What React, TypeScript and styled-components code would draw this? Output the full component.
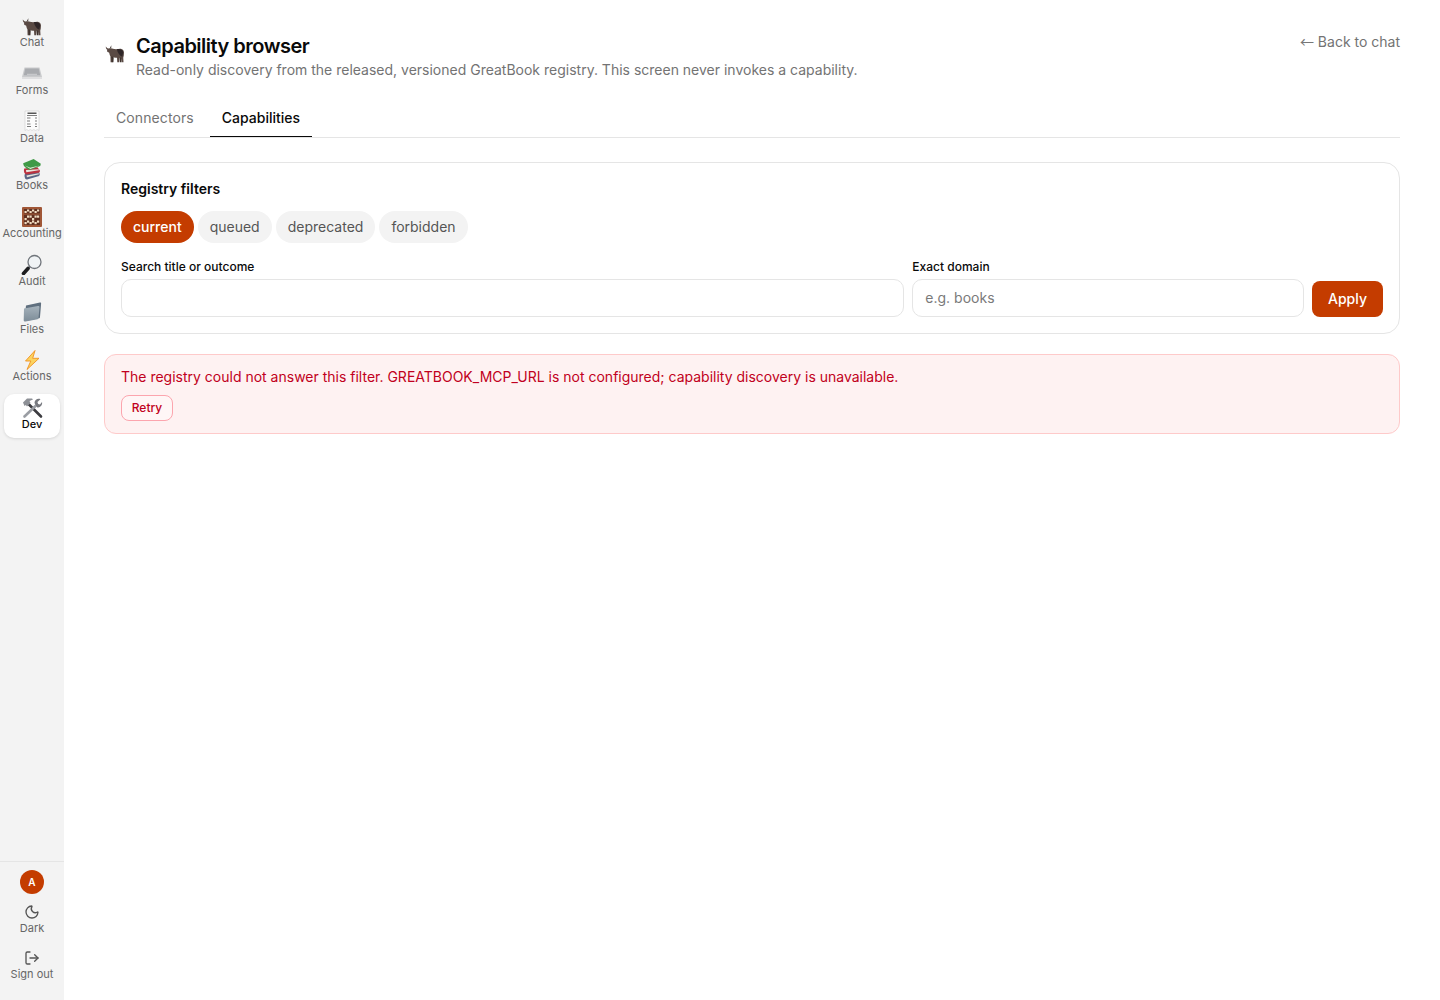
import React from "react";
import styled, { createGlobalStyle } from "styled-components";
import { Moon, LogOut } from "lucide-react";

const Global = createGlobalStyle`
  html, body { margin: 0; padding: 0; background: #fff; }
  body { font-family: Inter, "Liberation Sans", sans-serif; color: #0a0a0a; }
  * { box-sizing: border-box; }
`;
const Shell = styled.div`display: flex; min-height: 1000px; height: 1000px;`;
const Rail = styled.nav`
  width: 64px; flex: none; background: #f3f3f3; display: flex; flex-direction: column;
  align-items: center; padding: 12px 0 12px;
`;
const NavList = styled.div`display: flex; flex-direction: column; gap: 4px; align-items: center; flex: 1; width: 100%;`;
const NavItem = styled.a<{ $active?: boolean }>`
  width: 56px; height: 43.75px; display: flex; flex-direction: column; align-items: center; padding-top: 4px;
  border-radius: 10px; font-size: 11px; line-height: 14px; white-space: nowrap;
  color: ${p => (p.$active ? "#0a0a0a" : "#666")};
  background: ${p => (p.$active ? "#fff" : "transparent")};
  box-shadow: ${p => (p.$active ? "0 1px 3px rgba(0,0,0,.12)" : "none")};
  font-weight: ${p => (p.$active ? 500 : 400)};
`;
const NavIcon = styled.span`height: 19px; display: flex; align-items: center; justify-content: center; svg { display: block; flex: none; }`;
const RailFoot = styled.div`
  width: 100%; border-top: 1px solid #e5e5e5; display: flex; flex-direction: column; align-items: center;
  padding-top: 8px;
`;
const Avatar = styled.div`
  width: 24px; height: 24px; border-radius: 50%; background: #c43c00; color: #fff;
  font-size: 10px; font-weight: 600; display: flex; align-items: center; justify-content: center; margin-bottom: 2px;
`;
const FootButton = styled.a`
  height: 46px; display: flex; flex-direction: column; align-items: center; justify-content: center; gap: 1px;
  font-size: 11px; line-height: 14px; color: #666;
  svg { color: #555; }
`;
const Main = styled.main`flex: 1; padding: 32px 40px; min-width: 0;`;
const Header = styled.header`display: flex; justify-content: space-between; align-items: flex-start;`;
const TitleRow = styled.div`display: flex; align-items: center; gap: 10px; height: 48px;`;
const HeadIcon = styled.span`display: flex; margin-top: -7px;`;
const Title = styled.h1`margin: 0; font-size: 20px; line-height: 28px; font-weight: 600; letter-spacing: -0.5px; color: #0a0a0a;`;
const Sub = styled.p`margin: 0; font-size: 14px; line-height: 20px; color: #737373;`;
const Back = styled.a`font-size: 14px; line-height: 20px; color: #737373; margin-top: -1px;`;
const Arrow = styled.span`font-family: "Noto Sans CJK JP", sans-serif; color: #777; margin-left: -1px;`;
const Tabs = styled.div`display: flex; gap: 4px; margin-top: 18px; border-bottom: 1px solid #e5e5e5; height: 40px;`;
const Tab = styled.div<{ $active?: boolean }>`
  padding: 0 12px; height: 39px; line-height: 40px; font-size: 14px; font-weight: ${p => (p.$active ? 500 : 400)};
  letter-spacing: ${p => (p.$active ? "0" : "0.1px")};
  color: ${p => (p.$active ? "#0a0a0a" : "#737373")};
  border-bottom: 1px solid ${p => (p.$active ? "#0a0a0a" : "transparent")};
`;
const Card = styled.section`
  margin-top: 24px; border: 1px solid #e5e5e5; border-radius: 16px; padding: 16px; height: 172px;
`;
const CardTitle = styled.h2`margin: 0; font-size: 14px; line-height: 20px; font-weight: 600;`;
const Chips = styled.div`display: flex; gap: 4px; margin-top: 12px;`;
const Chip = styled.div<{ $active?: boolean }>`
  height: 32px; line-height: 32px; padding: 0 12px; border-radius: 999px; font-size: 14px;
  background: ${p => (p.$active ? "#c43c00" : "#f3f3f3")};
  color: ${p => (p.$active ? "#fff" : "#555")};
  font-weight: ${p => (p.$active ? 500 : 400)};
`;
const FilterRow = styled.div`display: flex; gap: 8px; align-items: flex-end; margin-top: 16px;`;
const Field = styled.label<{ $grow: number }>`display: flex; flex-direction: column; gap: 4px; flex: ${p => p.$grow} 1 0; min-width: 0;`;
const FieldLabel = styled.span`font-size: 12px; line-height: 16px; font-weight: 500; color: #0a0a0a;`;
const Input = styled.input`
  height: 38px; width: 100%; border: 1px solid #e5e5e5; border-radius: 10px; padding: 0 12px 2px; font: 14px Inter, sans-serif; outline: none;
  &::placeholder { color: #7a7a7a; }
`;
const Apply = styled.button`
  height: 36px; width: 71px; flex: none; border: 0; border-radius: 8px; background: #c43c00; color: #fff; font: 500 14px Inter, sans-serif; padding: 0 0 2px;
`;
const ErrorBox = styled.div`
  margin-top: 20px; height: 80px; border: 1px solid #fecaca; background: #fef2f2; border-radius: 12px; padding: 12px 16px;
`;
const ErrorText = styled.p`margin: 0; font-size: 14px; line-height: 20px; color: #c10020;`;
const Retry = styled.button`
  display: block; margin-top: 8px; height: 26px; width: 52px; padding: 0 0 2px; border: 1px solid #fca5ae; background: #fff6f6; border-radius: 8px;
  color: #c10020; font: 500 12px Inter, sans-serif;
`;

const Ox = ({ size = 22 }: { size?: number }) => (
  <svg width={size} height={size} viewBox="0 0 24 24">
    <path d="M5 7c2-.6 4 .2 6 .6 3 .6 6-.6 8 0 1.800.5 2.800 2 2.800 4 0 2-.3 4-.8 5.500l.3 4.900h-2l-.8-4.400-1.500-.5-.5 4.900h-2l-.3-4.900c-2 .3-3.500 0-4.500-.8l-.5 5.700h-2L7 15.500c-1-1.500-1-3-1.500-4C4 11.500 2.800 10.500 3.500 8.500 2.500 8 1.800 6.500 2 5c1 1.500 2 2.200 3 2Z" fill="#5a4a44"/>
    <path d="M6.500 6.600 8 3.500 7.800 7Z" fill="#3e322d"/>
    <path d="M14 7.800c3-.6 6 .2 7 3l-1 5.200c-3-1-5-4-6-8.200Z" fill="#2f2628"/>
    <path d="M8 15.500l.5 6.500h1.800l.3-5.500ZM17 17l.3 5H19l-.3-5Z" fill="#3e322d"/>
  </svg>
);
const Keyboard = () => (
  <svg width="22" height="22" viewBox="0 -1 22 22">
    <path d="M3.500 4.500h15L21 14v1.500H1V14Z" fill="#c9cacc"/>
    <path d="M4.300 5.500h13.400l1.500 6.800H2.800Z" fill="#a9abaf"/>
    <path d="M1 14h20v1.500H1Z" fill="#dfdfe0"/>
    <path d="M6 10.800h10v1H6Z" fill="#cfd0d2"/>
  </svg>
);
const Receipt = () => (
  <svg width="22" height="22" viewBox="0 0 22 22">
    <path d="M4 1h14v19.500l-1.700-1-1.800 1-1.700-1-1.800 1-1.700-1-1.800 1-1.700-1-1.800 1Z" fill="#fcfcfc" stroke="#cfcfcf" strokeWidth=".6"/>
    <path d="M6.500 2.500h9V4h-9ZM6 5h10v.7H6Z" fill="#555"/>
    <path d="M6 7.500h3.500v1H6ZM14 7.500h2v1h-2ZM6 10.500h3v1H6ZM14 10.500h2v1h-2ZM6 13.500h3.500v1H6ZM14 13.500h2v1h-2ZM6 16h4v1H6ZM14 16h2v1h-2Z" fill="#7d7d7d"/>
  </svg>
);
const Books = () => (
  <svg width="22" height="22" viewBox="2 1 18 20">
    <path d="M4.500 15.500 16.500 13l1.700 2.500-.7 1.800L6.500 20.500c-2 .3-2.800-3.500-2-5Z" fill="#5b6685"/>
    <path d="M6 17 17 14.800l.3 1L6.500 18.500Z" fill="#e6e3dc"/>
    <path d="M4 10.500 16 9.500l2.300 3-.5 1.700L6 16c-2.200 0-2.800-4-2-5.500Z" fill="#bb3240"/>
    <path d="M5.500 12 17 11.200l.3 1L5.800 14Z" fill="#e9e4dc"/>
    <path d="M3 5.800 12.500 2 19 6.300l-.5 2L9 12c-3-1-6-3.500-6-6.200Z" fill="#3f9a46"/>
    <path d="M4.500 7.800 9.500 11l8.300-3.200-8.500 2Z" fill="#e9e9e0"/>
  </svg>
);
const Abacus = () => (
  <svg width="22" height="22" viewBox="0 0 22 22">
    <rect x="1" y="1" width="20" height="20" rx="1" fill="#a05636"/>
    <rect x="3" y="3" width="16" height="16" fill="#5f2f1f"/>
    <path d="M3 7.500h16v1.200H3Z" fill="#a15a3a"/>
    {[3.5, 6, 8.5, 11, 13.5, 16].map((x, i) => (
      <g key={i} fill="#f0dcc2">
        <rect x={x} y={i % 2 ? 3.5 : 5} width="2.2" height="2"/>
        <rect x={x} y={i % 3 ? 9.5 : 12} width="2.2" height="2.2"/>
        <rect x={x} y={i % 2 ? 14.5 : 16} width="2.2" height="2.2"/>
      </g>
    ))}
  </svg>
);
const Magnifier = () => (
  <svg width="22" height="22" viewBox="0 -1 22 22">
    <circle cx="13.500" cy="8" r="6.500" fill="#f0f3f5" stroke="#70757b" strokeWidth="1.300"/>
    <path d="M9 12.500 7.500 14" stroke="#6a6e74" strokeWidth="2"/>
    <path d="M7 14.500 2.500 19.500" stroke="#1d1d1f" strokeWidth="3.600" strokeLinecap="round"/>
  </svg>
);
const Folder = () => (
  <svg width="22" height="22" viewBox="0 0 22 22">
    <path d="M5 4.500 19 1.500c.8-.1 1.200.4 1.100 1.200L19 16c0 .8-.5 1.200-1.200 1.300L5 20c-1 .2-1.800-.2-1.700-1.200Z" fill="#5f6f7e"/>
    <defs>
      <linearGradient id="folderFront" x1="0" y1="0" x2="0" y2="1"><stop offset="0" stopColor="#a5b2bb"/><stop offset="1" stopColor="#7d8c98"/></linearGradient>
    </defs>
    <path d="M3 7.500l14-2.500c1-.1 1.600.3 1.500 1.300L17.500 17c0 .7-.4 1-1 1.200L4.500 20.500c-1 .1-1.800-.3-1.800-1.300Z" fill="url(#folderFront)"/>
  </svg>
);
const Bolt = () => (
  <svg width="22" height="22" viewBox="0 0 22 22">
    <path d="M14 1.500 4.500 12h5.300L6 20.500 18 9.300h-6.300Z" fill="#fbd35f" stroke="#f0911f" strokeWidth=".9" strokeLinejoin="round"/>
  </svg>
);
const Tools = () => (
  <svg width="22" height="22" viewBox="0 0 22 22">
    <path d="M6.500 6 20 19.500" stroke="#3c3c40" strokeWidth="2.600" strokeLinecap="round"/>
    <path d="M2 5.500 6 1.500h5l1 1L8.500 4l1 2-3.500 3.500-1.200-1.500L3.500 9Z" fill="#8d9096"/>
    <path d="M16 7.500 3.500 19.500" stroke="#9a9da3" strokeWidth="2.600" strokeLinecap="round"/>
    <path d="M13.500 6c0-3 3-5 6-3.800L16.500 5l.5 2 2 .5L21 5c.8 3-2 6.200-5 5.200Z" fill="#77797f"/>
  </svg>
);

const nav = [
  { label: "Chat", icon: <Ox /> },
  { label: "Forms", icon: <Keyboard /> },
  { label: "Data", icon: <Receipt /> },
  { label: "Books", icon: <Books /> },
  { label: "Accounting", icon: <Abacus /> },
  { label: "Audit", icon: <Magnifier /> },
  { label: "Files", icon: <Folder /> },
  { label: "Actions", icon: <Bolt /> },
  { label: "Dev", icon: <Tools />, active: true },
];

export default function App() {
  return (
    <Shell>
      <Global />
      <Rail>
        <NavList>
          {nav.map(n => (
            <NavItem key={n.label} $active={n.active}><NavIcon>{n.icon}</NavIcon>{n.label}</NavItem>
          ))}
        </NavList>
        <RailFoot>
          <Avatar>A</Avatar>
          <FootButton><Moon size={16} />Dark</FootButton>
          <FootButton><LogOut size={16} />Sign out</FootButton>
        </RailFoot>
      </Rail>
      <Main>
        <Header>
          <TitleRow>
            <HeadIcon><Ox size={22} /></HeadIcon>
            <div>
              <Title>Capability browser</Title>
              <Sub>Read-only discovery from the released, versioned GreatBook registry. This screen never invokes a capability.</Sub>
            </div>
          </TitleRow>
          <Back><Arrow>←</Arrow> Back to chat</Back>
        </Header>
        <Tabs>
          <Tab>Connectors</Tab>
          <Tab $active>Capabilities</Tab>
        </Tabs>
        <Card>
          <CardTitle>Registry filters</CardTitle>
          <Chips>
            <Chip $active>current</Chip>
            <Chip>queued</Chip>
            <Chip>deprecated</Chip>
            <Chip>forbidden</Chip>
          </Chips>
          <FilterRow>
            <Field $grow={2}><FieldLabel>Search title or outcome</FieldLabel><Input /></Field>
            <Field $grow={1}><FieldLabel>Exact domain</FieldLabel><Input placeholder="e.g. books" /></Field>
            <Apply>Apply</Apply>
          </FilterRow>
        </Card>
        <ErrorBox>
          <ErrorText>The registry could not answer this filter. GREATBOOK_MCP_URL is not configured; capability discovery is unavailable.</ErrorText>
          <Retry>Retry</Retry>
        </ErrorBox>
      </Main>
    </Shell>
  );
}
